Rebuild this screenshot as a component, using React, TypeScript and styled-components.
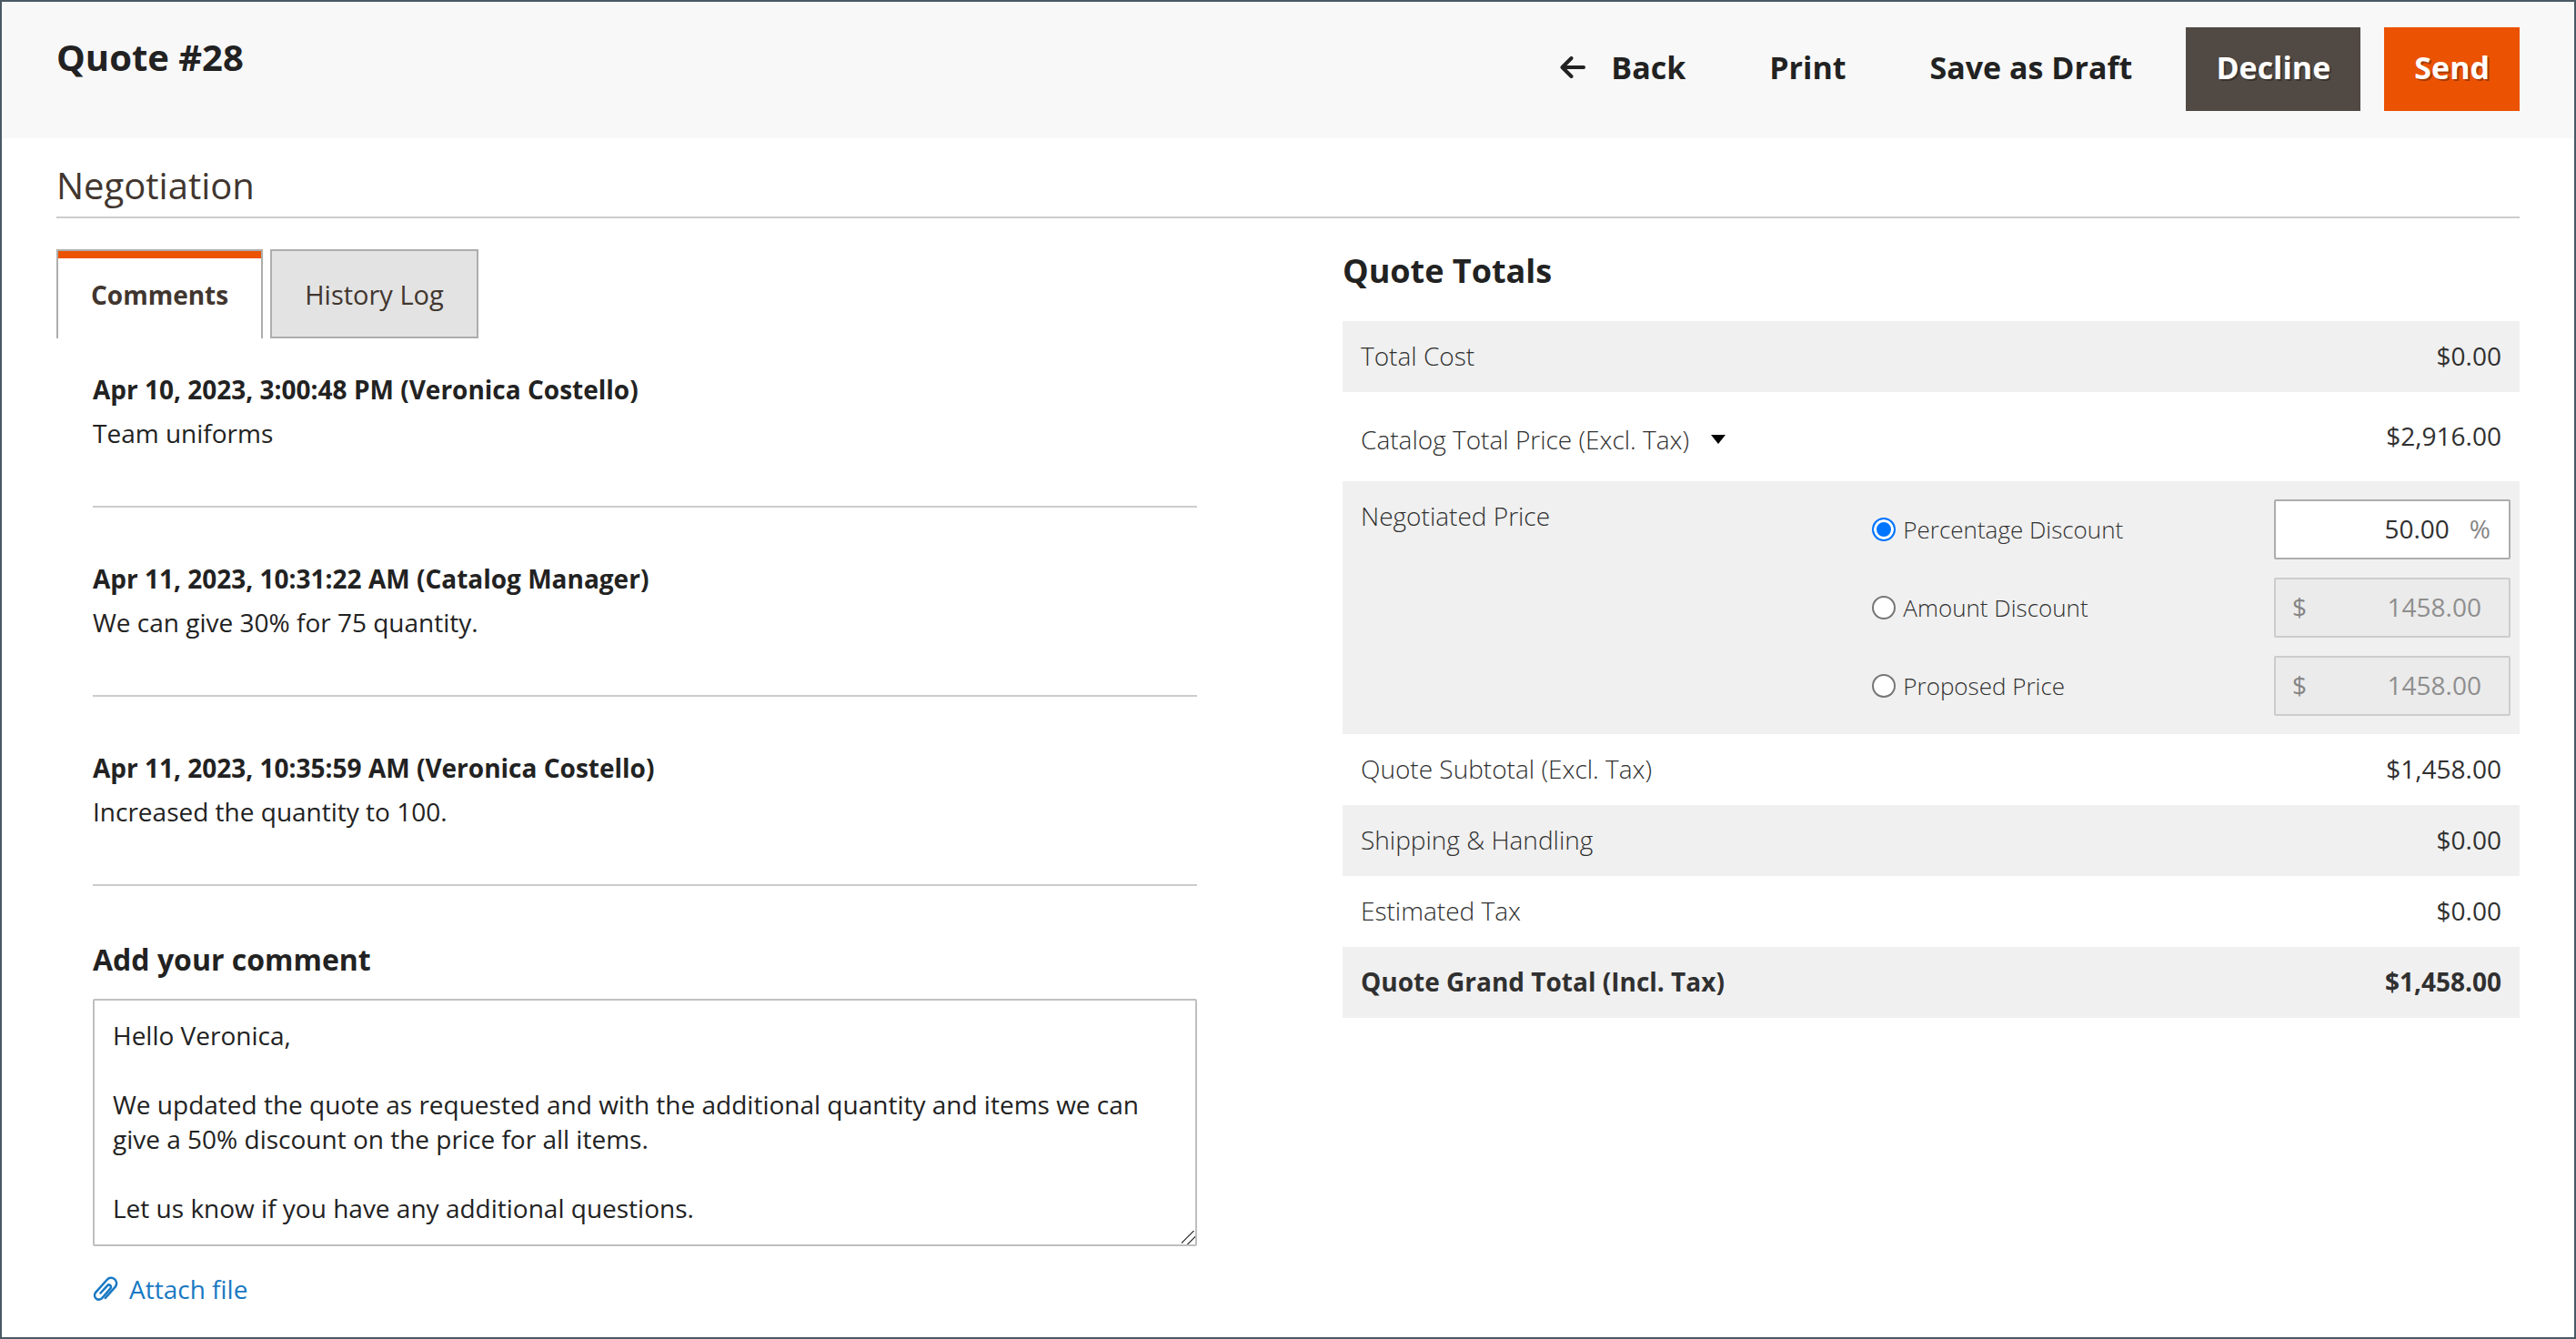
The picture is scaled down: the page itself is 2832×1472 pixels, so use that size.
import React, { useState } from "react";
import styled, { createGlobalStyle, css } from "styled-components";

const GlobalStyle = createGlobalStyle`
  *, *::before, *::after { box-sizing: border-box; }
  html, body, #root { min-height: 100vh; }
  body {
    margin: 0;
    background: #fff;
    color: #222;
    font-family: "Open Sans", "Noto Sans", sans-serif;
    font-size: 28px;
    line-height: 38px;
  }
  #root { display: flex; }
  button, input, textarea { font: inherit; color: inherit; margin: 0; }
  h1, h2, h3, p { margin: 0; }
`;

const Page = styled.div`
  flex: 1;
  min-width: 0;
  border: 2px solid #4a5a65;
`;

const Header = styled.header`
  display: flex;
  justify-content: space-between;
  align-items: flex-start;
  padding: 28px 60px 30px;
  background: #f8f8f8;
`;

const PageTitle = styled.h1`
  padding-top: 6px;
  font-size: 40px;
  line-height: 54px;
  font-weight: 700;
`;

const Actions = styled.div`
  display: flex;
  gap: 26px;
`;

const ActionButton = styled.button<{ $fill?: string }>`
  display: flex;
  align-items: center;
  gap: 28px;
  padding: 22px 33px 26px;
  border: 0;
  background: transparent;
  font-size: 34px;
  line-height: 44px;
  font-weight: 700;
  cursor: pointer;
  ${({ $fill }) =>
    $fill &&
    css`
      background: ${$fill};
      color: #fff;
      text-shadow: 2px 2px 0 rgba(0, 0, 0, 0.3);
    `}
`;

const Main = styled.main`
  padding: 25px 60px 20px;
`;

const SectionTitle = styled.h2`
  padding-bottom: 7px;
  border-bottom: 2px solid #ccc;
  color: #41362f;
  font-size: 40px;
  line-height: 54px;
  font-weight: 400;
`;

const Columns = styled.div`
  display: grid;
  grid-template-columns: minmax(0, 1254fr) minmax(0, 1294fr);
  column-gap: 160px;
  padding-top: 34px;
`;

const TabList = styled.div`
  display: flex;
  gap: 8px;
`;

const Tab = styled.button<{ $active: boolean }>`
  padding: 29px 36px 27px;
  border: 2px solid #adadad;
  background: #e3e3e3;
  color: #41362f;
  font-size: 29px;
  cursor: pointer;
  ${({ $active }) =>
    $active &&
    css`
      border-bottom-width: 0;
      padding-bottom: 29px;
      background: #fff;
      box-shadow: inset 0 8px 0 #eb5202;
      font-size: 28px;
      font-weight: 700;
    `}
`;

const TabPanel = styled.div`
  padding-left: 40px;
`;

const CommentList = styled.ul`
  margin: 0;
  padding: 0;
  list-style: none;
`;

const CommentItem = styled.li`
  padding: 59px 0 61px;
  border-bottom: 2px solid #ccc;
  &:first-child { padding-top: 37px; }
`;

const CommentMeta = styled.h3`
  margin-bottom: 10px;
  font-size: 28px;
  line-height: 38px;
  font-weight: 700;
`;

const CommentText = styled.p`
  line-height: 38px;
`;

const CommentForm = styled.form`
  display: flex;
  flex-direction: column;
  align-items: flex-start;
`;

const CommentLabel = styled.label`
  padding: 59px 0 21px;
  font-size: 32px;
  line-height: 44px;
  font-weight: 700;
`;

const CommentBox = styled.textarea`
  display: block;
  width: 100%;
  height: 272px;
  padding: 19px 20px;
  border: 2px solid #bfbfbf;
  border-radius: 2px;
  background: #fff;
  resize: vertical;
  &::-webkit-resizer {
    background: linear-gradient(
      135deg,
      transparent 41%,
      #555 42%,
      #555 48%,
      transparent 49%,
      transparent 67%,
      #555 68%,
      #555 74%,
      transparent 75%
    );
  }
`;

const AttachLink = styled.a`
  display: flex;
  align-items: center;
  gap: 12px;
  padding-top: 28px;
  color: #1979c3;
  text-decoration: none;
`;

const TotalsTitle = styled.h2`
  padding-bottom: 31px;
  font-size: 36px;
  line-height: 48px;
  font-weight: 700;
`;

const TotalsTable = styled.table`
  width: 100%;
  border-collapse: collapse;
  color: #303030;
`;

const TotalsRow = styled.tr<{ $strong?: boolean; $tall?: boolean }>`
  vertical-align: top;
  font-weight: ${({ $strong }) => ($strong ? 700 : 400)};
  &:nth-child(odd) { background: #f0f0f0; }
  > * { padding: ${({ $tall }) => ($tall ? "29px 20px 31px" : "19px 20px 21px")}; }
  > th { font-weight: ${({ $strong }) => ($strong ? 700 : 300)}; }
`;

const RowLabel = styled.th`
  text-align: left;
`;

const RowValue = styled.td`
  text-align: right;
`;

const Expander = styled.button`
  display: flex;
  align-items: center;
  gap: 24px;
  height: 38px;
  padding: 8px 0 0;
  border: 0;
  background: transparent;
  cursor: pointer;
`;

const OptionsCell = styled.td`
  width: 55%;
  && { padding: 20px 10px 20px 0; }
`;

const Options = styled.div`
  display: grid;
  row-gap: 20px;
`;

const Option = styled.div`
  display: flex;
  justify-content: space-between;
  align-items: center;
`;

const OptionLabel = styled.label`
  display: flex;
  align-items: center;
  gap: 8px;
  font-size: 26px;
  font-weight: 300;
`;

const Radio = styled.input`
  appearance: none;
  width: 26px;
  height: 26px;
  border: 2px solid #767676;
  border-radius: 50%;
  background: #fff;
  &:checked {
    border-color: #0075ff;
    background: #0075ff;
    box-shadow: inset 0 0 0 3px #fff;
  }
`;

const MoneyField = styled.div<{ $disabled: boolean }>`
  display: flex;
  align-items: center;
  gap: 22px;
  width: 260px;
  padding: 11px 20px 13px 18px;
  border: 2px solid #adadad;
  border-radius: 2px;
  background: #fff;
  ${({ $disabled }) =>
    $disabled &&
    css`
      padding-right: 30px;
      border-color: #cccccc;
      background: #ebebeb;
      color: #8e8e8e;
    `}
`;

const MoneyInput = styled.input`
  flex: 1;
  min-width: 0;
  height: 38px;
  padding: 0;
  border: 0;
  outline: 0;
  background: transparent;
  text-align: right;
`;

const Unit = styled.span`
  color: #858585;
`;

const ArrowLeft = () => (
  <svg width="28" height="24" viewBox="0 0 28 24" fill="none" stroke="#222" strokeWidth="4" strokeLinecap="round" strokeLinejoin="round" aria-hidden="true">
    <path d="M12.500 2 2.500 12 12.500 22M3 12h23" />
  </svg>
);

const Caret = () => (
  <svg width="16" height="10" viewBox="0 0 16 10" aria-hidden="true">
    <path d="M0 0h16L8 10z" fill="#000" />
  </svg>
);

const Paperclip = () => (
  <svg width="28" height="28" viewBox="0 0 28 28" fill="none" stroke="#1979c3" strokeWidth="2.5" strokeLinecap="round" aria-hidden="true">
    <path d="M8.500 18.500 16 10.300a2.300 2.300 0 0 1 3.400 3.100L10.500 23.700a4.700 4.700 0 0 1-7.600-5.600L15.500 4a6 6 0 0 1 9.300 7.600L13.800 24" />
  </svg>
);

const comments = [
  { meta: "Apr 10, 2023, 3:00:48 PM (Veronica Costello)", text: "Team uniforms" },
  { meta: "Apr 11, 2023, 10:31:22 AM (Catalog Manager)", text: "We can give 30% for 75 quantity." },
  { meta: "Apr 11, 2023, 10:35:59 AM (Veronica Costello)", text: "Increased the quantity to 100." },
];

const reply = `Hello Veronica,

We updated the quote as requested and with the additional quantity and items we can give a 50% discount on the price for all items.

Let us know if you have any additional questions.`;

const options = [
  { id: "percentage", label: "Percentage Discount", value: "50.00", unit: "%" },
  { id: "amount", label: "Amount Discount", value: "1458.00", unit: "$" },
  { id: "proposed", label: "Proposed Price", value: "1458.00", unit: "$" },
];

export default function App() {
  const [tab, setTab] = useState("comments");
  const [mode, setMode] = useState("percentage");

  return (
    <>
      <GlobalStyle />
      <Page>
        <Header>
          <PageTitle>Quote #28</PageTitle>
          <Actions>
            <ActionButton type="button"><ArrowLeft />Back</ActionButton>
            <ActionButton type="button">Print</ActionButton>
            <ActionButton type="button">Save as Draft</ActionButton>
            <ActionButton type="button" $fill="#514943">Decline</ActionButton>
            <ActionButton type="button" $fill="#eb5202">Send</ActionButton>
          </Actions>
        </Header>
        <Main>
          <SectionTitle>Negotiation</SectionTitle>
          <Columns>
            <section>
              <TabList role="tablist">
                <Tab type="button" role="tab" aria-selected={tab === "comments"} $active={tab === "comments"} onClick={() => setTab("comments")}>Comments</Tab>
                <Tab type="button" role="tab" aria-selected={tab === "history"} $active={tab === "history"} onClick={() => setTab("history")}>History Log</Tab>
              </TabList>
              <TabPanel role="tabpanel">
                <CommentList>
                  {comments.map((c) => (
                    <CommentItem key={c.meta}>
                      <CommentMeta>{c.meta}</CommentMeta>
                      <CommentText>{c.text}</CommentText>
                    </CommentItem>
                  ))}
                </CommentList>
                <CommentForm>
                  <CommentLabel htmlFor="comment">Add your comment</CommentLabel>
                  <CommentBox id="comment" defaultValue={reply} spellCheck={false} />
                  <AttachLink href="#attach"><Paperclip />Attach file</AttachLink>
                </CommentForm>
              </TabPanel>
            </section>
            <section>
              <TotalsTitle>Quote Totals</TotalsTitle>
              <TotalsTable>
                <tbody>
                  <TotalsRow>
                    <RowLabel scope="row">Total Cost</RowLabel>
                    <RowValue>$0.00</RowValue>
                  </TotalsRow>
                  <TotalsRow $tall>
                    <RowLabel scope="row"><Expander type="button">Catalog Total Price (Excl. Tax)<Caret /></Expander></RowLabel>
                    <RowValue>$2,916.00</RowValue>
                  </TotalsRow>
                  <TotalsRow>
                    <RowLabel scope="row">Negotiated Price</RowLabel>
                    <OptionsCell>
                      <Options role="radiogroup" aria-label="Negotiated Price">
                        {options.map((o) => {
                          const off = mode !== o.id;
                          return (
                            <Option key={o.id}>
                              <OptionLabel>
                                <Radio type="radio" name="negotiated" checked={!off} onChange={() => setMode(o.id)} />
                                {o.label}
                              </OptionLabel>
                              <MoneyField $disabled={off}>
                                {o.unit === "$" && <Unit>$</Unit>}
                                <MoneyInput aria-label={o.label} defaultValue={o.value} disabled={off} />
                                {o.unit === "%" && <Unit>%</Unit>}
                              </MoneyField>
                            </Option>
                          );
                        })}
                      </Options>
                    </OptionsCell>
                  </TotalsRow>
                  <TotalsRow>
                    <RowLabel scope="row">Quote Subtotal (Excl. Tax)</RowLabel>
                    <RowValue>$1,458.00</RowValue>
                  </TotalsRow>
                  <TotalsRow>
                    <RowLabel scope="row">Shipping &amp; Handling</RowLabel>
                    <RowValue>$0.00</RowValue>
                  </TotalsRow>
                  <TotalsRow>
                    <RowLabel scope="row">Estimated Tax</RowLabel>
                    <RowValue>$0.00</RowValue>
                  </TotalsRow>
                  <TotalsRow $strong>
                    <RowLabel scope="row">Quote Grand Total (Incl. Tax)</RowLabel>
                    <RowValue>$1,458.00</RowValue>
                  </TotalsRow>
                </tbody>
              </TotalsTable>
            </section>
          </Columns>
        </Main>
      </Page>
    </>
  );
}
